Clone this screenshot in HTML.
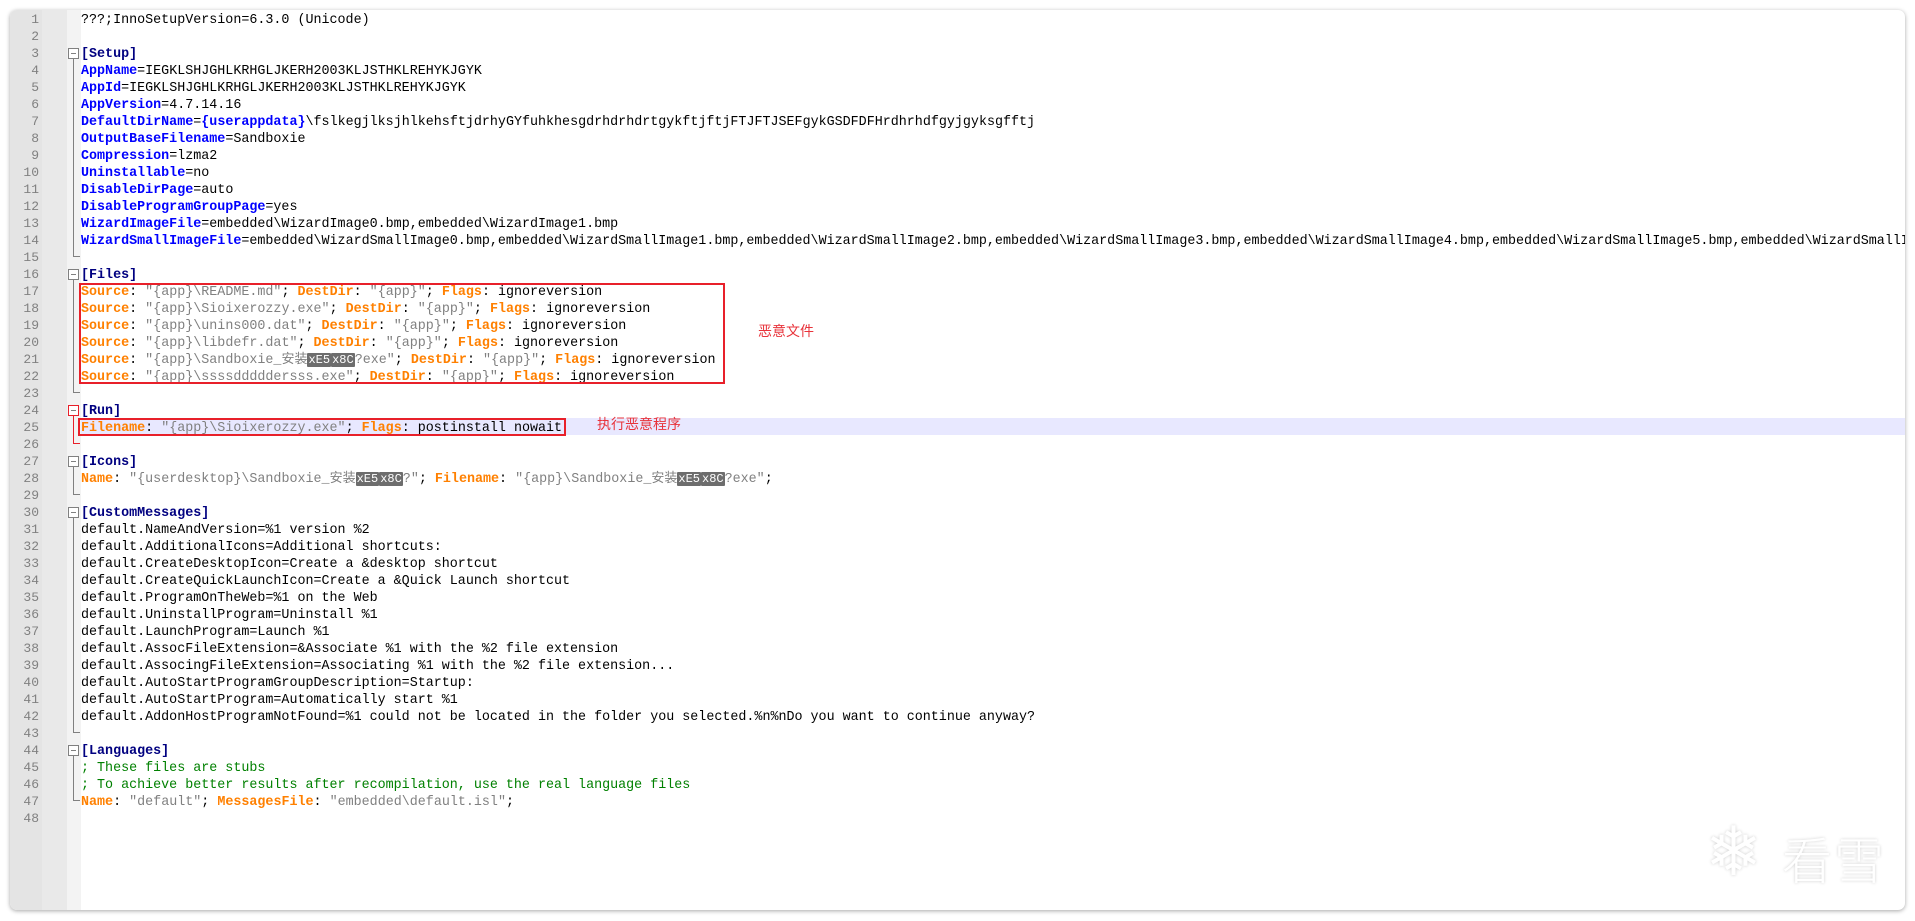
<!DOCTYPE html>
<html><head><meta charset="utf-8">
<style>
html,body{margin:0;padding:0;width:1915px;height:921px;overflow:hidden;background:#fff;}
.card{position:absolute;left:10px;top:10px;width:1895px;height:900px;border-radius:7px;background:#fff;box-shadow:0 1px 4px rgba(0,0,0,.35);overflow:hidden;}
.g1{position:absolute;left:0;top:0;width:32px;height:900px;background:#e4e4e4;}
.g2{position:absolute;left:32px;top:0;width:25px;height:900px;background:#e9e9e9;}
.g3{position:absolute;left:57px;top:0;width:14px;height:900px;background:#f3f3f3;}
.ln{position:absolute;left:0;width:29px;text-align:right;font:13px "Liberation Mono",monospace;color:#808080;line-height:17px;height:17px;margin-top:1px;}
.t{position:absolute;left:71px;white-space:pre;font:13.36px "Liberation Mono",monospace;line-height:17px;height:17px;color:#000;margin-top:2px;}
.k{color:#0000ff;font-weight:bold}
.s{color:#000080;font-weight:bold}
.o{color:#ff8000;font-weight:bold}
.q{color:#808080}
.c{color:#008000}
.cj{font-family:"Noto Sans CJK SC",sans-serif;font-size:13px;line-height:0}
.x{background:#6d6d6d;color:#fff;font-size:12px;padding:0 1px;border-radius:1px;line-height:0}
.fb{position:absolute;left:58px;width:9px;height:9px;border:1px solid #808080;background:#fff;}
.fb:after{content:"";position:absolute;left:2px;top:4px;width:5px;height:1px;background:#808080;}
.fl{position:absolute;left:63px;width:1px;background:#808080;}
.fe{position:absolute;left:63px;width:7px;height:1px;background:#808080;}
.red{position:absolute;border:2px solid #e8202a;}
.lbl{position:absolute;color:#e8333b;font:14px "Noto Sans CJK SC",sans-serif;}
.hl{position:absolute;left:71px;top:408px;width:1830px;height:17px;background:#e8e8ff;}
</style></head><body>
<div class="card">
<div class="g1"></div><div class="g2"></div><div class="g3"></div>
<div class="hl"></div>
<div class="ln" style="top:0">1</div><div class="ln" style="top:17px">2</div><div class="ln" style="top:34px">3</div><div class="ln" style="top:51px">4</div><div class="ln" style="top:68px">5</div><div class="ln" style="top:85px">6</div><div class="ln" style="top:102px">7</div><div class="ln" style="top:119px">8</div><div class="ln" style="top:136px">9</div><div class="ln" style="top:153px">10</div><div class="ln" style="top:170px">11</div><div class="ln" style="top:187px">12</div><div class="ln" style="top:204px">13</div><div class="ln" style="top:221px">14</div><div class="ln" style="top:238px">15</div><div class="ln" style="top:255px">16</div><div class="ln" style="top:272px">17</div><div class="ln" style="top:289px">18</div><div class="ln" style="top:306px">19</div><div class="ln" style="top:323px">20</div><div class="ln" style="top:340px">21</div><div class="ln" style="top:357px">22</div><div class="ln" style="top:374px">23</div><div class="ln" style="top:391px">24</div><div class="ln" style="top:408px">25</div><div class="ln" style="top:425px">26</div><div class="ln" style="top:442px">27</div><div class="ln" style="top:459px">28</div><div class="ln" style="top:476px">29</div><div class="ln" style="top:493px">30</div><div class="ln" style="top:510px">31</div><div class="ln" style="top:527px">32</div><div class="ln" style="top:544px">33</div><div class="ln" style="top:561px">34</div><div class="ln" style="top:578px">35</div><div class="ln" style="top:595px">36</div><div class="ln" style="top:612px">37</div><div class="ln" style="top:629px">38</div><div class="ln" style="top:646px">39</div><div class="ln" style="top:663px">40</div><div class="ln" style="top:680px">41</div><div class="ln" style="top:697px">42</div><div class="ln" style="top:714px">43</div><div class="ln" style="top:731px">44</div><div class="ln" style="top:748px">45</div><div class="ln" style="top:765px">46</div><div class="ln" style="top:782px">47</div><div class="ln" style="top:799px">48</div>

<div class="fb" style="top:38px"></div><div class="fl" style="top:49px;height:197px"></div><div class="fe" style="top:246px"></div>
<div class="fb" style="top:259px"></div><div class="fl" style="top:270px;height:112px"></div><div class="fe" style="top:382px"></div>
<div class="fb" style="top:395px;border-color:#e8202a"></div><div class="fl" style="top:406px;height:27px;background:#e8202a"></div><div class="fe" style="top:433px;background:#e8202a"></div>
<div class="fb" style="top:446px"></div><div class="fl" style="top:457px;height:27px"></div><div class="fe" style="top:484px"></div>
<div class="fb" style="top:497px"></div><div class="fl" style="top:508px;height:214px"></div><div class="fe" style="top:722px"></div>
<div class="fb" style="top:735px"></div><div class="fl" style="top:746px;height:44px"></div><div class="fe" style="top:790px"></div>

<div class="t" style="top:0">???;InnoSetupVersion=6.3.0 (Unicode)</div>
<div class="t" style="top:34px"><span class="s">[Setup]</span></div>
<div class="t" style="top:51px"><span class="k">AppName</span>=IEGKLSHJGHLKRHGLJKERH2003KLJSTHKLREHYKJGYK</div>
<div class="t" style="top:68px"><span class="k">AppId</span>=IEGKLSHJGHLKRHGLJKERH2003KLJSTHKLREHYKJGYK</div>
<div class="t" style="top:85px"><span class="k">AppVersion</span>=4.7.14.16</div>
<div class="t" style="top:102px"><span class="k">DefaultDirName</span>=<span class="k">{userappdata}</span>\fslkegjlksjhlkehsftjdrhyGYfuhkhesgdrhdrhdrtgykftjftjFTJFTJSEFgykGSDFDFHrdhrhdfgyjgyksgfftj</div>
<div class="t" style="top:119px"><span class="k">OutputBaseFilename</span>=Sandboxie</div>
<div class="t" style="top:136px"><span class="k">Compression</span>=lzma2</div>
<div class="t" style="top:153px"><span class="k">Uninstallable</span>=no</div>
<div class="t" style="top:170px"><span class="k">DisableDirPage</span>=auto</div>
<div class="t" style="top:187px"><span class="k">DisableProgramGroupPage</span>=yes</div>
<div class="t" style="top:204px"><span class="k">WizardImageFile</span>=embedded\WizardImage0.bmp,embedded\WizardImage1.bmp</div>
<div class="t" style="top:221px"><span class="k">WizardSmallImageFile</span>=embedded\WizardSmallImage0.bmp,embedded\WizardSmallImage1.bmp,embedded\WizardSmallImage2.bmp,embedded\WizardSmallImage3.bmp,embedded\WizardSmallImage4.bmp,embedded\WizardSmallImage5.bmp,embedded\WizardSmallImage6.bmp</div>
<div class="t" style="top:255px"><span class="s">[Files]</span></div>
<div class="t" style="top:272px"><span class="o">Source</span>: <span class="q">"{app}\README.md"</span>; <span class="o">DestDir</span>: <span class="q">"{app}"</span>; <span class="o">Flags</span>: ignoreversion</div>
<div class="t" style="top:289px"><span class="o">Source</span>: <span class="q">"{app}\Sioixerozzy.exe"</span>; <span class="o">DestDir</span>: <span class="q">"{app}"</span>; <span class="o">Flags</span>: ignoreversion</div>
<div class="t" style="top:306px"><span class="o">Source</span>: <span class="q">"{app}\unins000.dat"</span>; <span class="o">DestDir</span>: <span class="q">"{app}"</span>; <span class="o">Flags</span>: ignoreversion</div>
<div class="t" style="top:323px"><span class="o">Source</span>: <span class="q">"{app}\libdefr.dat"</span>; <span class="o">DestDir</span>: <span class="q">"{app}"</span>; <span class="o">Flags</span>: ignoreversion</div>
<div class="t" style="top:340px"><span class="o">Source</span>: <span class="q">"{app}\Sandboxie_<span class="cj">安装</span><span class="x">xE5</span><span class="x">x8C</span>?exe"</span>; <span class="o">DestDir</span>: <span class="q">"{app}"</span>; <span class="o">Flags</span>: ignoreversion</div>
<div class="t" style="top:357px"><span class="o">Source</span>: <span class="q">"{app}\ssssdddddersss.exe"</span>; <span class="o">DestDir</span>: <span class="q">"{app}"</span>; <span class="o">Flags</span>: ignoreversion</div>
<div class="t" style="top:391px"><span class="s">[Run]</span></div>
<div class="t" style="top:408px"><span class="o">Filename</span>: <span class="q">"{app}\Sioixerozzy.exe"</span>; <span class="o">Flags</span>: postinstall nowait</div>
<div class="t" style="top:442px"><span class="s">[Icons]</span></div>
<div class="t" style="top:459px"><span class="o">Name</span>: <span class="q">"{userdesktop}\Sandboxie_<span class="cj">安装</span><span class="x">xE5</span><span class="x">x8C</span>?"</span>; <span class="o">Filename</span>: <span class="q">"{app}\Sandboxie_<span class="cj">安装</span><span class="x">xE5</span><span class="x">x8C</span>?exe"</span>;</div>
<div class="t" style="top:493px"><span class="s">[CustomMessages]</span></div>
<div class="t" style="top:510px">default.NameAndVersion=%1 version %2</div>
<div class="t" style="top:527px">default.AdditionalIcons=Additional shortcuts:</div>
<div class="t" style="top:544px">default.CreateDesktopIcon=Create a &amp;desktop shortcut</div>
<div class="t" style="top:561px">default.CreateQuickLaunchIcon=Create a &amp;Quick Launch shortcut</div>
<div class="t" style="top:578px">default.ProgramOnTheWeb=%1 on the Web</div>
<div class="t" style="top:595px">default.UninstallProgram=Uninstall %1</div>
<div class="t" style="top:612px">default.LaunchProgram=Launch %1</div>
<div class="t" style="top:629px">default.AssocFileExtension=&amp;Associate %1 with the %2 file extension</div>
<div class="t" style="top:646px">default.AssocingFileExtension=Associating %1 with the %2 file extension...</div>
<div class="t" style="top:663px">default.AutoStartProgramGroupDescription=Startup:</div>
<div class="t" style="top:680px">default.AutoStartProgram=Automatically start %1</div>
<div class="t" style="top:697px">default.AddonHostProgramNotFound=%1 could not be located in the folder you selected.%n%nDo you want to continue anyway?</div>
<div class="t" style="top:731px"><span class="s">[Languages]</span></div>
<div class="t" style="top:748px"><span class="c">; These files are stubs</span></div>
<div class="t" style="top:765px"><span class="c">; To achieve better results after recompilation, use the real language files</span></div>
<div class="t" style="top:782px"><span class="o">Name</span>: <span class="q">"default"</span>; <span class="o">MessagesFile</span>: <span class="q">"embedded\default.isl"</span>;</div>

<div class="red" style="left:69px;top:273px;width:642px;height:97px"></div>
<div class="red" style="left:68px;top:408px;width:484px;height:14px"></div>
<div class="lbl" style="left:748px;top:311px">恶意文件</div>
<div class="lbl" style="left:587px;top:404px">执行恶意程序</div>

<div style="position:absolute;left:1695px;top:808px;font:68px 'DejaVu Sans',sans-serif;line-height:70px;color:#fff;text-shadow:0 0 3px rgba(0,0,0,.2)">❄</div>
<div style="position:absolute;left:1772px;top:818px;font:50px 'Noto Sans CJK SC',sans-serif;font-weight:300;line-height:60px;color:#fff;text-shadow:0 0 3px rgba(0,0,0,.2);letter-spacing:2px">看雪</div>
</div>
</body></html>
